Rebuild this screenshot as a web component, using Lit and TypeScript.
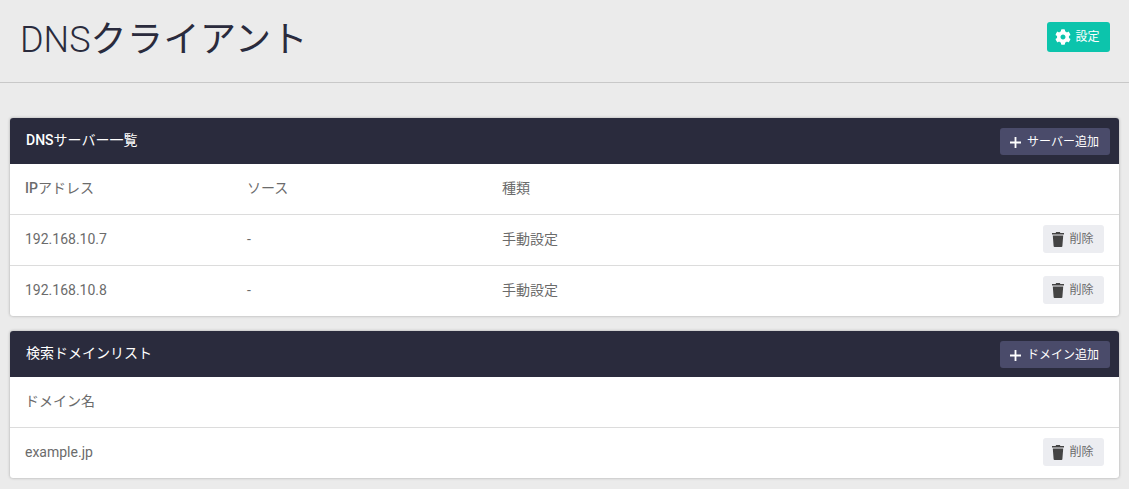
import { LitElement, html, css, svg } from "lit";
import { customElement } from "lit/decorators.js";

const gear = svg`<path fill="currentColor" d="M487.4 315.7l-42.6-24.6c4.3-23.2 4.3-47 0-70.2l42.6-24.6c4.9-2.8 7.1-8.6 5.5-14-11.1-35.6-30-67.8-54.7-94.6-3.8-4.1-10-5.1-14.8-2.3L380.8 110c-17.9-15.4-38.5-27.3-60.8-35.1V25.8c0-5.6-3.9-10.5-9.4-11.7-36.7-8.2-74.3-7.8-109.2 0-5.5 1.2-9.4 6.1-9.4 11.7V75c-22.2 7.9-42.8 19.8-60.8 35.1L88.7 85.5c-4.9-2.8-11-1.9-14.8 2.3-24.7 26.7-43.6 58.9-54.7 94.6-1.7 5.4.6 11.2 5.5 14L67.3 221c-4.3 23.2-4.3 47 0 70.2l-42.6 24.6c-4.9 2.8-7.1 8.6-5.5 14 11.1 35.6 30 67.8 54.7 94.6 3.8 4.1 10 5.1 14.8 2.3l42.6-24.6c17.9 15.4 38.5 27.3 60.8 35.1v49.2c0 5.6 3.9 10.5 9.4 11.7 36.7 8.2 74.3 7.8 109.2 0 5.5-1.2 9.4-6.1 9.4-11.7v-49.2c22.2-7.9 42.8-19.8 60.8-35.1l42.6 24.6c4.9 2.8 11 1.9 14.8-2.3 24.7-26.7 43.6-58.9 54.7-94.6 1.5-5.5-.7-11.3-5.6-14.1zM256 336c-44.1 0-80-35.9-80-80s35.9-80 80-80 80 35.9 80 80-35.9 80-80 80z"/>`;

@customElement("app-root")
export class AppRoot extends LitElement {
  static styles = css`
    :host {
      display: block;
      width: 1129px;
      height: 489px;
      overflow: hidden;
      background: #ebebeb;
      font-family: Roboto, "Noto Sans CJK JP", sans-serif;
      color: #6b6b6b;
    }
    .page-head {
      height: 82px;
      border-bottom: 1px solid #c8c8c8;
      display: flex;
      justify-content: space-between;
      align-items: flex-start;
      padding: 0 19px 0 20px;
    }
    h1 {
      margin: 19px 0 0;
      font-size: 36px;
      line-height: 42px;
      font-weight: 400;
      color: #2a2b3d;
    }
    .light { font-weight: 300; }
    .medium { font-weight: 500; }
    .kana { letter-spacing: 0.5px; }
    .btn {
      display: inline-flex;
      align-items: center;
      justify-content: center;
      gap: 4px;
      border: 0;
      border-radius: 3px;
      font: inherit;
      font-size: 12px;
      padding: 0;
      box-sizing: border-box;
    }
    .label { margin-bottom: 3px; }
    .settings {
      margin-top: 22px;
      width: 63px;
      height: 30px;
      padding-right: 2px;
      background: #0cc4ac;
      color: #fff;
    }
    .settings svg { width: 16px; height: 16px; }
    .content {
      padding: 35px 10px 0;
      display: flex;
      flex-direction: column;
      gap: 15px;
    }
    .card {
      background: #fff;
      border-radius: 3px;
      box-shadow: 0 0 3px rgba(0, 0, 0, 0.3);
      overflow: hidden;
    }
    .card-head {
      height: 46px;
      background: #2a2b3d;
      color: #fff;
      display: flex;
      align-items: center;
      justify-content: space-between;
      padding: 0 9px 0 16px;
      font-size: 14px;
    }
    .card-title { margin-bottom: 4px; }
    .add {
      height: 27px;
      width: 110px;
      background: #4a4b6a;
      color: #fff;
      font-size: 12px;
      gap: 6px;
      padding-right: 1px;
    }
    .add svg { width: 11px; height: 11px; margin-top: 2px; }
    .add .label { margin-bottom: 2px; }
    .row {
      height: 48px;
      display: grid;
      grid-template-columns: 222px 255px 1fr auto;
      align-items: center;
      padding: 0 15px 2px;
      font-size: 14px;
      border-top: 1px solid #dcdcdc;
    }
    .row.first { border-top: 0; }
    .row span { margin-bottom: 2px; }
    .row span.latin { margin-bottom: 0; }
    .row.domain { grid-template-columns: 1fr auto; }
    .del {
      width: 61px;
      height: 28px;
      background: #ecedf1;
      color: #6b6b6b;
      gap: 5px;
      font-size: 12px;
      padding-right: 1px;
    }
    .del svg { width: 12px; height: 15px; color: #444; margin-top: 1px; }
    .del .label { margin-bottom: 3px; }
  `;

  private plus() {
    return html`<svg viewBox="0 0 12 12"><path d="M6 0v12M0 6h12" stroke="currentColor" stroke-width="2" fill="none"/></svg>`;
  }

  private del() {
    return html`<button class="btn del">
      <svg viewBox="0 0 12 15"><path fill="currentColor" d="M4.2 0h3.6l.6 1H12v1.6H0V1h3.6zM.8 3.6h10.4L10.4 14a1 1 0 0 1-1 1H2.6a1 1 0 0 1-1-1z"/></svg>
      <span class="label">削除</span>
    </button>`;
  }

  render() {
    return html`
      <header class="page-head">
        <h1><span class="light">DNS</span><span class="kana">クライアント</span></h1>
        <button class="btn settings"><svg viewBox="0 0 512 512">${gear}</svg><span class="label">設定</span></button>
      </header>
      <main class="content">
        <section class="card">
          <div class="card-head">
            <span class="card-title"><span class="medium">DNS</span>サーバー一覧</span>
            <button class="btn add">${this.plus()}<span class="label">サーバー追加</span></button>
          </div>
          <div class="row first"><span><span class="medium">IP</span>アドレス</span><span>ソース</span><span>種類</span><span></span></div>
          <div class="row"><span class="latin">192.168.10.7</span><span class="latin">-</span><span>手動設定</span>${this.del()}</div>
          <div class="row"><span class="latin">192.168.10.8</span><span class="latin">-</span><span>手動設定</span>${this.del()}</div>
        </section>
        <section class="card">
          <div class="card-head">
            <span class="card-title">検索ドメインリスト</span>
            <button class="btn add">${this.plus()}<span class="label">ドメイン追加</span></button>
          </div>
          <div class="row first domain"><span>ドメイン名</span><span></span></div>
          <div class="row domain"><span class="latin">example.jp</span>${this.del()}</div>
        </section>
      </main>
    `;
  }
}
